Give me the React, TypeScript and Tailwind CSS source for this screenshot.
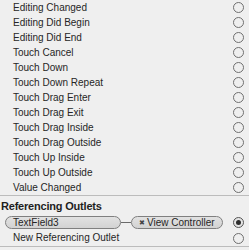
import React from "react";

const events = [
  "Editing Changed",
  "Editing Did Begin",
  "Editing Did End",
  "Touch Cancel",
  "Touch Down",
  "Touch Down Repeat",
  "Touch Drag Enter",
  "Touch Drag Exit",
  "Touch Drag Inside",
  "Touch Drag Outside",
  "Touch Up Inside",
  "Touch Up Outside",
  "Value Changed",
];

function Ring() {
  return <div className="w-[11px] h-[11px] rounded-full border border-[#6f6f6f] shrink-0" />;
}

export default function App() {
  return (
    <div
      className="w-[249px] h-[250px] bg-[#efefef] overflow-hidden text-[10px] text-[#262626] leading-none"
      style={{ fontFamily: '"Liberation Sans", Arial, sans-serif' }}
    >
      {events.map((e) => (
        <div key={e} className="h-[15px] flex items-center justify-between pl-[13px] pr-[5px]">
          <span>{e}</span>
          <Ring />
        </div>
      ))}
      <div className="h-px bg-[#bcbcbc]" />
      <div className="h-[19px] flex items-center pl-px pt-px">
        <span className="font-bold text-[11px] text-[#1e1e1e] tracking-[-0.2px]">Referencing Outlets</span>
      </div>
      <div className="h-[15px] flex items-start pt-px pr-[5px]">
        <div className="ml-[5px] w-[116px] h-[13px] rounded-full border border-[#7f7f7f] bg-gradient-to-b from-[#e2e2e2] to-[#d2d2d2] flex items-center pl-[7px] shrink-0">
          <span>TextField3</span>
        </div>
        <div className="w-[10px] h-px bg-[#6a6a6a] mt-[6px] shrink-0" />
        <div className="w-[92px] h-[13px] rounded-full border border-[#7f7f7f] bg-gradient-to-b from-[#e2e2e2] to-[#d2d2d2] flex items-center pl-[7px] shrink-0">
          <span className="w-[5px] text-[7px] text-[#444] mr-[3px] flex justify-center">✖</span>
          <span className="whitespace-nowrap">View Controller</span>
        </div>
        <div className="ml-auto w-[11px] h-[11px] rounded-full border border-[#555] bg-[#e4e4e4] flex items-center justify-center mt-px shrink-0">
          <div className="w-[5px] h-[5px] rounded-full bg-[#2e2e2e]" />
        </div>
      </div>
      <div className="h-[16px] flex items-center justify-between pl-[13px] pr-[5px]">
        <span>New Referencing Outlet</span>
        <Ring />
      </div>
      <div className="h-px bg-[#bcbcbc]" />
    </div>
  );
}
